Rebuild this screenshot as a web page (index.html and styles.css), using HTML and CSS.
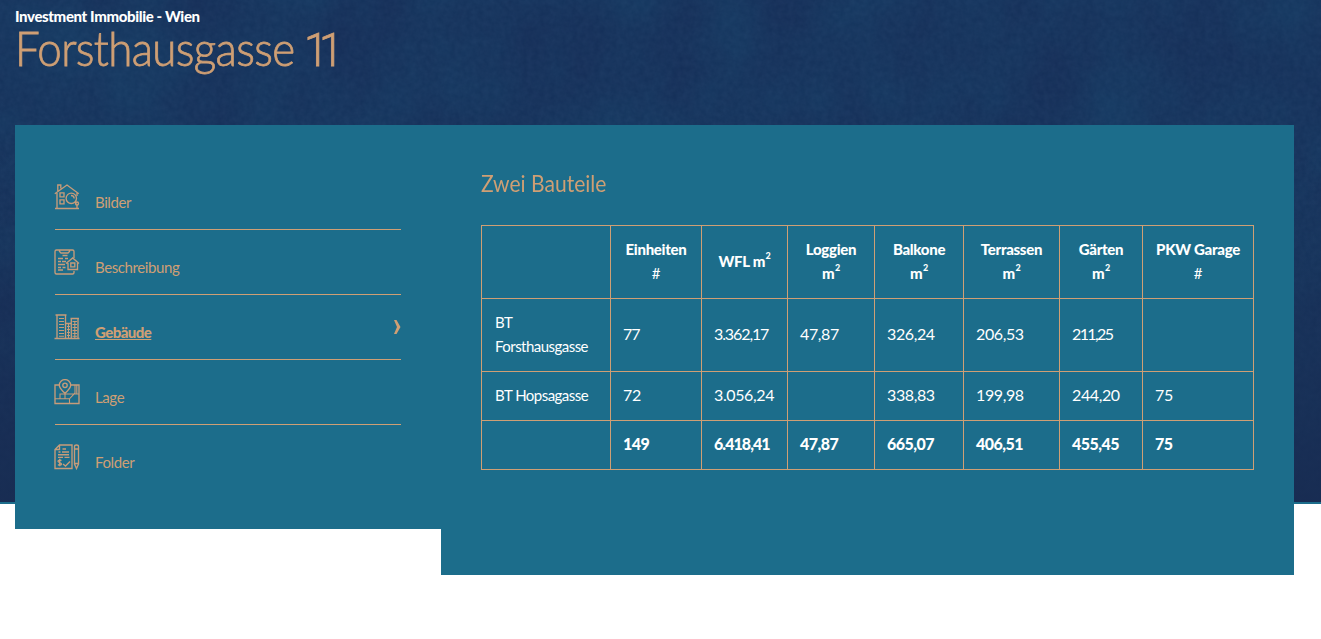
FILE: index.html
```html
<!DOCTYPE html>
<html lang="de">
<head>
<meta charset="utf-8">
<title>Forsthausgasse 11</title>
<link rel="stylesheet" href="styles.css">
</head>
<body>
<div class="backdrop">
  <svg width="100%" height="100%" aria-hidden="true">
    <filter id="clouds" x="0" y="0" width="100%" height="100%" color-interpolation-filters="sRGB">
      <feTurbulence type="fractalNoise" baseFrequency="0.012 0.009" numOctaves="5" seed="8"/>
      <feColorMatrix values="0 0 0 0 0.09  0.15 0 0 0 0.14  0.13 0 0 0 0.31  0 0 0 0 0.65"/>
    </filter>
    <filter id="grain" x="0" y="0" width="100%" height="100%" color-interpolation-filters="sRGB">
      <feTurbulence type="fractalNoise" baseFrequency="0.18" numOctaves="3" seed="3"/>
      <feColorMatrix values="0.12 0 0 0 0.04  0.12 0 0 0 0.16  0.12 0 0 0 0.32  0 0 0 0 0.3"/>
    </filter>
    <rect width="100%" height="100%" filter="url(#clouds)"/>
    <rect width="100%" height="100%" filter="url(#grain)"/>
  </svg>
</div>
<main class="page">
  <header class="heading">
    <p class="kicker">Investment Immobilie - Wien</p>
    <h1 class="title">Forsthausgasse <span class="number">11</span></h1>
  </header>
  <div class="panels">
    <nav class="menu">
      <a class="item">
        <svg class="icon" viewBox="0 0 26 26"><path d="M1 24.500h24M3 24V9M0.800 9.800 13 1l11.800 8.800M3.800 7V1h3v3.500M23 9v3"/><path d="M6 8.800h4v4H6zM6 15.800h4v4H6z"/><circle cx="17.300" cy="14.300" r="5.200"/><path d="M17 11.500q3 0 3.200 3M21 18l1.500 1.500"/><circle cx="23" cy="19.500" r="1.500"/><path d="M23 21v3"/></svg>
        <span class="label">Bilder</span>
      </a>
      <a class="item">
        <svg class="icon" viewBox="0 0 26 26"><path d="M20 9V2.500Q20 1 18.500 1h-16Q1 1 1 2.500v21Q1 25 2.500 25h16q1.500 0 1.500-1.500V22M5.500 1v1.500L7 4h7l1.500-1.500V1M8.500 6.500h5M4 9.500h5M11 9.500h3M4 12.500h3M8 12.500h4M4 15.500h7M4 18.500h3M8.500 18.500h3M4 21h5"/><path d="M12 14.500 18.700 9l6.300 5.500M14 14v6.500h9.500V14M16.800 14h4v3.800h-4z"/></svg>
        <span class="label">Beschreibung</span>
      </a>
      <a class="item item-active">
        <svg class="icon" viewBox="0 0 26 26"><path d="M0.500 24.500h25M3 24V1.500M11.500 24V1.500M1.500 1h11M11.500 9.500h5.500M17.300 4.500v20M24 4.500v20M16.500 4.500h8.500"/><path class="fine" d="M5 4.500h5M5 7.500h5M5 10.500h5M5 13.500h5M5 16.500h5M5 19.500h5M5 22.200h5M13 12.500h3M13 15.500h3M13 18.500h3M13 21.500h3M14.500 10v14M18.500 7.500h4.500M18.500 10.500h4.500M18.500 13.500h4.500M18.500 16.500h4.500M18.500 19.500h4.500M18.500 22.200h4.500M20.800 7v17"/></svg>
        <span class="label">Gebäude</span>
        <svg class="arrow" viewBox="0 0 7 14"><path d="M0 0h2.500L6.500 7 2.500 14H0L3 7z"/></svg>
      </a>
      <a class="item">
        <svg class="icon" viewBox="0 0 26 26"><path d="M5.500 6H1v18.500h24V6h-8.500"/><path d="M11 14.500C8.500 11.500 5.300 9.500 5.300 6.300a5.700 5.700 0 0 1 11.400 0C16.700 9.500 13.500 11.500 11 14.500z"/><circle cx="11" cy="6.300" r="2.200"/><path class="fine" d="M1 19.800h14.500L21 14V6M6 19.500V15h19M15.500 20v4.500M22.800 6v9M11 15v5"/></svg>
        <span class="label">Lage</span>
      </a>
      <a class="item">
        <svg class="icon" viewBox="0 0 26 26"><path d="M5.500 1H18v23.500H1V5.500zM5.500 1v4.500H1M8.500 5h3.500M4.500 8h2M8 8h7M4 10.700h11M4 13.300h5M10.500 13.300h5"/><path d="M7.500 16.500c-1.500-1-3.500-.5-3.500.8 0 1.500 3.500 1 3.500 2.700 0 1.500-2.500 1.500-3.500.5M5.700 14.800v7.500M9 20l2.500 2 4.500-4.500"/><path d="M20.500 2.500q0-1.500 2-1.500t2 1.500V20l-2 4.500-2-4.500zM20.500 5h4M20.500 19.500h4"/></svg>
        <span class="label">Folder</span>
      </a>
    </nav>
    <section class="content">
      <h2 class="subtitle">Zwei Bauteile</h2>
      <table class="units">
        <colgroup><col class="c1"><col class="c2"><col class="c3"><col class="c4"><col class="c5"><col class="c6"><col class="c7"><col class="c8"></colgroup>
        <thead>
          <tr><th></th><th>Einheiten<br><span class="hash">#</span></th><th>WFL m<span class="sq">2</span></th><th>Loggien<br>m<span class="sq">2</span></th><th>Balkone<br>m<span class="sq">2</span></th><th>Terrassen<br>m<span class="sq">2</span></th><th>Gärten<br>m<span class="sq">2</span></th><th>PKW Garage<br><span class="hash">#</span></th></tr>
        </thead>
        <tbody>
          <tr><td class="name">BT<br>Forsthausgasse</td><td class="snug">77</td><td class="snug">3.362,17</td><td>47,87</td><td>326,24</td><td>206,53</td><td class="tight">211,25</td><td></td></tr>
          <tr><td class="name">BT Hopsagasse</td><td>72</td><td>3.056,24</td><td></td><td>338,83</td><td>199,98</td><td>244,20</td><td>75</td></tr>
          <tr class="total"><td></td><td>149</td><td class="snug">6.418,41</td><td>47,87</td><td>665,07</td><td>406,51</td><td>455,45</td><td>75</td></tr>
        </tbody>
      </table>
    </section>
  </div>
</main>
</body>
</html>
```
FILE: styles.css
```css
* { box-sizing: border-box; }
body { margin: 0; background: #fff; color: #fff; font: 16px/24px Lato, "Open Sans", sans-serif; overflow: hidden; }
.backdrop { position: absolute; top: 0; left: 0; width: 100%; height: 504px; background: #19365f; border-bottom: 2px solid #1c6d8b; overflow: hidden; }
.backdrop::after { content: ""; position: absolute; inset: 0; background: linear-gradient(rgba(24,42,80,0) 30%, rgba(24,42,80,.85)); }
.backdrop svg { display: block; }
.page { position: relative; padding: 8px 27px 0 15px; }
.heading { height: 117px; }
.kicker { margin: 0; font-size: 15px; line-height: 17px; font-weight: 900; letter-spacing: -.37px; }
.title { margin: 0; font-size: 47px; line-height: 46px; font-weight: 300; letter-spacing: -.7px; color: #cf9f74; -webkit-text-stroke: .8px #cf9f74; transform: scaleX(.935); transform-origin: 0 0; white-space: nowrap; }
.number { margin-left: -2px; font-family: Roboto, sans-serif; letter-spacing: -10px; }
.panels { display: flex; align-items: flex-start; }
.menu { width: 426px; height: 404px; padding: 40px 40px 0; background: #1c6d8b; }
.item { display: flex; align-items: flex-start; height: 65px; padding-top: 18px; border-bottom: 1px solid #cf9f74; color: #cf9f74; font-size: 15px; letter-spacing: -.4px; }
.item:last-child { border-bottom: 0; }
.icon { flex: none; width: 26px; height: 26px; margin: 1px 0 0 -1px; fill: none; stroke: #c79c7a; stroke-width: 1.35; }
.icon .fine { stroke-width: 1.1; }
.label { margin: 7px 0 0 15px; }
.item-active .label { font-weight: 900; letter-spacing: -.55px; text-decoration: underline; }
.arrow { width: 7px; height: 14px; margin: 7px 0 0 auto; fill: #cf9f74; }
.content { width: 853px; height: 450px; padding: 40px; background: #1c6d8b; }
.subtitle { margin: 0; height: 60px; font-size: 23px; line-height: 36px; font-weight: 400; color: #cf9f74; transform: scaleX(.915); transform-origin: 0 0; }
.units { width: 773px; table-layout: fixed; border-collapse: collapse; }
.c1 { width: 129px; } .c2 { width: 91px; } .c3 { width: 86px; } .c4 { width: 87px; }
.c5 { width: 89px; } .c6 { width: 96px; } .c7 { width: 83px; } .c8 { width: 111px; }
.units th, .units td { height: 49px; padding: 11px 0 13px 12px; border: 1px solid #cf9f74; text-align: left; vertical-align: middle; white-space: nowrap; letter-spacing: -.38px; }
.units th { padding: 11px 0 13px; text-align: center; font-size: 15px; font-weight: 900; letter-spacing: -.3px; }
.units .name { padding-left: 13px; font-size: 15px; letter-spacing: -.53px; }
.units .snug { letter-spacing: -1.1px; }
.units .tight { letter-spacing: -1.6px; }
.hash { font-weight: 400; }
.sq { position: relative; top: -8px; margin-left: .5px; font-size: 9px; line-height: 0; }
.units .total td { font-weight: 900; letter-spacing: -.55px; }
.units .total .snug { letter-spacing: -.95px; }
```
